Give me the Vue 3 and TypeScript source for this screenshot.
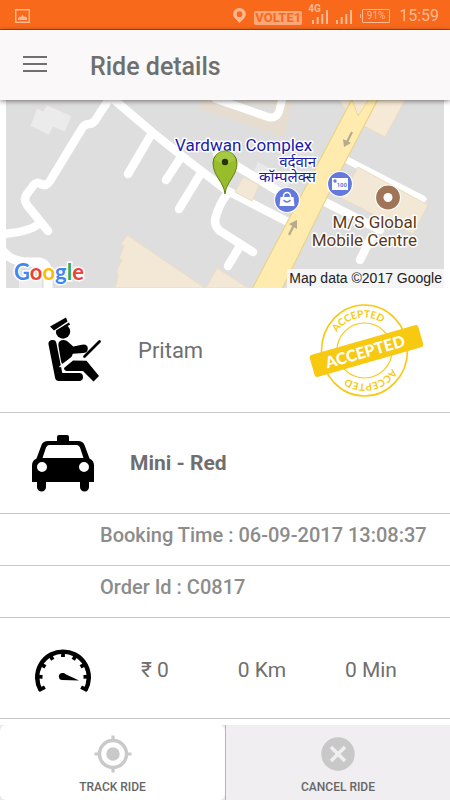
<script setup lang="ts">
interface RideStat {
  id: string
  label: string
}

const ride = {
  driver: 'Pritam',
  vehicle: 'Mini - Red',
  bookingTime: '06-09-2017 13:08:37',
  orderId: 'C0817',
}

const stats: RideStat[] = [
  { id: 'fare', label: '₹ 0' },
  { id: 'distance', label: '0 Km' },
  { id: 'duration', label: '0 Min' },
]

const dialTicks: number[] = [-118, -88, -59, -30, 0, 30, 59, 88, 118]
</script>

<template>
  <div class="screen">
    <div class="status-bar">
      <svg class="status-picture" width="15" height="14" viewBox="0 0 15 14" aria-hidden="true">
        <rect x="0.7" y="0.7" width="13.6" height="12.6" fill="none" stroke="currentColor" stroke-width="1.4" />
        <path d="M3 11V9l2-1.500 1 .5 1.500-2.500L9 8l1-.7L12 9v2z" fill="currentColor" />
      </svg>
      <svg class="status-pin" width="13" height="15" viewBox="0 0 13 15" aria-hidden="true">
        <path fill="currentColor" fill-rule="evenodd" d="M6.5 0A6.3 6.3 0 0 0 .2 6.2C.2 9.5 4 12 6.5 15 9 12 12.800 9.500 12.800 6.200A6.300 6.300 0 0 0 6.500 0zM6.500 3.300a2.900 2.900 0 1 1 0 5.800 2.900 2.900 0 0 1 0-5.800z" />
      </svg>
      <span class="volte">VOLTE1</span>
      <span class="signal">
        <span class="network">4G</span>
        <svg width="16" height="14" viewBox="0 0 16 14" fill="currentColor" aria-hidden="true">
          <path d="M0 10h2v4H0zM4.700 7h2v7h-2zM9.300 4h2v10h-2zM14 0h2v14h-2z" />
        </svg>
      </span>
      <svg class="signal-two" width="16" height="14" viewBox="0 0 16 14" fill="currentColor" aria-hidden="true">
        <path d="M0 10h2v4H0zM4.700 7h2v7h-2zM9.300 4h2v10h-2zM14 0h2v14h-2z" />
      </svg>
      <span class="battery">91%</span>
      <span class="clock">15:59</span>
    </div>

    <header class="app-bar">
      <button class="menu" type="button" aria-label="Menu">
        <svg width="24" height="18" viewBox="0 0 24 18" aria-hidden="true">
          <path d="M0 2h24M0 9h24M0 16h24" stroke="currentColor" stroke-width="2.200" />
        </svg>
      </button>
      <h1>Ride details</h1>
    </header>

    <main>
      <svg class="map" viewBox="6 100 438 188" preserveAspectRatio="xMidYMid slice" role="img" aria-label="Pickup location">
        <rect x="6" y="100" width="438" height="188" fill="#dedede" />
        <path d="M47 105l25 11-7 16-12-5-4 8-19-9 7-18 6 3z" fill="#ebebeb" stroke="#dfddd9" stroke-width="0.700" />
        <path d="M200 100v9l85 28 7-37z" fill="#e6dcd0" />
        <path d="M224 100h52l-4 13-9-2-39-11z" fill="#dedede" />
        <path d="M238 100h38l-2 6q-18 0-36-6z" fill="#e2ddd6" />
        <path d="M258 162l34 18-8 12-32-17z" fill="#e9e9e9" />
        <path d="M19 276h23v12H19z" fill="#eeeeee" />
        <g fill="none" stroke="#fff" stroke-width="8.500" stroke-linecap="round" stroke-linejoin="round">
          <path d="M110 98L98 116q-4 8-9 8t-8 6L50 181q-4 6-9 3t-8 2l-6 8q-4 5 0 11l21 26" />
          <path d="M39 223q-6 8-35 11" />
          <path d="M2 250q8 11 23 12h14q9 2 9 12v16" stroke-width="9" />
          <path d="M112 98l40 34 30 24 44 34 66 34" />
          <path d="M152 133l-24 41M181 157l-15 23M201 173l-22 36" />
          <path d="M227 194q-8 11-11 22-3 9 4 15l33 21M240 246l-12 20" />
          <path d="M217 154l77 47" />
          <path d="M216 99l52 18q8 2 11-5l4-16" stroke-width="8" />
          <path d="M325 202l55 28M371 238l-11 22" />
          <path d="M345 159l78 40" stroke-width="7" />
        </g>
        <g fill="#f2e8d5" stroke="#edddc0" stroke-width="1">
          <path d="M127 235l78 53h-90l3-11-1-7 5-10-3-2 5-12-3-2z" />
          <path d="M217 268l31 20h-42z" />
          <path d="M358 167l70 38-15 29-72-36z" />
          <path d="M243 177l16 8-7 16-17-9z" />
          <path d="M377 100l-13 26 21 11 20-37z" fill="#f6e9d5" />
          <path d="M338 98l10 15 5-15z" />
        </g>
        <path d="M352 99l-100 190h30l46-94 50-96z" fill="#ffebad" stroke="#ead391" stroke-width="1.200" />
        <path d="M352 99l6 17 11-17z" fill="#f6e9d5" stroke="#ead391" stroke-width="0.800" />
        <g fill="none" stroke="#b5ab8d" stroke-width="2.200">
          <path d="M352 132l-5 10M289 235l5-10" />
          <path d="M343 139l8 4-7 4zM297 220l-8 4 8 5z" fill="#b5ab8d" stroke="none" />
        </g>

        <g class="map-place">
          <text x="175" y="151" font-size="17">Vardwan Complex</text>
          <text x="316" y="167" font-size="15" text-anchor="end">वर्दवान</text>
          <text x="316" y="182" font-size="15" text-anchor="end">कॉम्पलेक्स</text>
        </g>
        <g class="map-place map-shop" text-anchor="end">
          <text x="417" y="228" font-size="17">M/S Global</text>
          <text x="417" y="246" font-size="17">Mobile Centre</text>
        </g>

        <g stroke="#fff" stroke-width="1.200">
          <circle cx="287" cy="200" r="12.500" fill="#6579dc" />
          <circle cx="340" cy="184" r="12.500" fill="#6579dc" />
          <circle cx="388" cy="197.500" r="12.500" fill="#a07456" />
        </g>
        <circle cx="388" cy="197.500" r="4.500" fill="#fff" />
        <path d="M280.500 197h13l1 9h-15z" fill="#fff" />
        <path d="M283.500 198v-2a3.500 3.500 0 0 1 7 0v2" fill="none" stroke="#fff" stroke-width="1.500" />
        <path d="M283.500 200q3.500 4 7 0" fill="none" stroke="#6579dc" stroke-width="1.300" />
        <rect x="332" y="178" width="16" height="12" fill="#fff" />
        <circle cx="335" cy="181" r="1.700" fill="#6579dc" />
        <text class="ticket" x="347" y="187" font-size="6" text-anchor="end">100</text>

        <path d="M225 194c-1-12-12-18-12-31a12 12 0 0 1 24 0c0 13-11 19-12 31z" fill="#97bd2b" stroke="#5f7d16" stroke-width="1" />
        <path d="M215 160a10 10 0 0 1 20 0q-10 7-20 0z" fill="#b8d657" opacity="0.500" />
        <circle cx="225" cy="162" r="3.200" fill="#26330b" />

        <text class="google" x="14" y="280" font-size="22"><tspan fill="#4285f4">G</tspan><tspan fill="#ea4335">o</tspan><tspan fill="#fbbc05">o</tspan><tspan fill="#4285f4">g</tspan><tspan fill="#34a853">l</tspan><tspan fill="#ea4335">e</tspan></text>
        <rect x="287" y="269" width="157" height="19" fill="#f5f5f5" />
        <text class="attribution" x="442" y="283" font-size="14" text-anchor="end">Map data ©2017 Google</text>
      </svg>

      <section class="row driver">
        <svg class="driver-icon" width="54" height="66" viewBox="0 0 54 66" aria-hidden="true">
          <circle cx="15" cy="14.500" r="7.200" />
          <path d="M3 17L25 6V0H2z" fill="#fff" />
          <path d="M2 9.500L18 .5l1.500 4L6 13.500z" />
          <path d="M8.500 14.500L21.500 6.500" stroke="#000" stroke-width="2.200" />
          <path d="M4.500 27L11 60h20" fill="none" stroke="#000" stroke-width="8" stroke-linecap="round" stroke-linejoin="round" />
          <path d="M10.300 28q0-5 5.500-5 3 0 5.500 3l4 3.500 10-2q4.500 0 4.500 4t-4 4.500l-11 .7-1.500 4-8.300 6.500q-1.500-.7-2-3z" />
          <path d="M16 51l9-7.500 13.500.3L51 59l-5.500 5.500L35 54H19q-3-.5-3-3z" />
          <path d="M11.500 50L24.500 40" stroke="#fff" stroke-width="1.500" />
          <path d="M36.500 39.500L51.500 24.500" stroke="#000" stroke-width="2.800" stroke-linecap="round" />
        </svg>
        <span class="driver-name">{{ ride.driver }}</span>
        <svg class="stamp" width="116" height="96" viewBox="309 302 116 96" role="img" aria-label="Accepted">
          <defs>
            <path id="stamp-arc" d="M331.500 350.500a33 33 0 0 1 66 0" />
          </defs>
          <g fill="none" stroke="#f8c911">
            <ellipse cx="364.500" cy="350.500" rx="43" ry="45.500" stroke-width="1.600" />
            <circle cx="364.500" cy="350.500" r="27.500" stroke-width="1.200" />
          </g>
          <g class="stamp-text stamp-ring">
            <text font-size="10" transform="rotate(-12 364.500 350.500)"><textPath href="#stamp-arc" startOffset="50%">ACCEPTED</textPath></text>
            <text font-size="10" transform="rotate(168 364.500 350.500)"><textPath href="#stamp-arc" startOffset="50%">ACCEPTED</textPath></text>
          </g>
          <g transform="rotate(-16 366.500 351)">
            <rect x="310" y="339.500" width="113" height="23" rx="3" fill="#f8c911" />
            <text class="stamp-text stamp-band" x="365" y="357" font-size="16">ACCEPTED</text>
          </g>
        </svg>
      </section>

      <section class="row vehicle">
        <svg width="62" height="57" viewBox="0 0 62 57" aria-hidden="true">
          <path fill-rule="evenodd" d="M27 0h8q2 0 2 2v4h9q5 0 6.500 4l5 13.500q4.500 2 4.500 7V47h-5v5a4.500 4.500 0 0 1-9 0v-5H14v5a4.500 4.500 0 0 1-9 0v-5H0V30.500q0-5 4.500-7l5-13.500Q11 6 16 6h9V2q0-2 2-2zM17 10q-2 0-3 2.500L10.500 23h41L48 12.500Q47 10 45 10zM10 27a5 5 0 1 0 0 10 5 5 0 0 0 0-10zM52 27a5 5 0 1 0 0 10 5 5 0 0 0 0-10z" />
        </svg>
        <span class="vehicle-name">{{ ride.vehicle }}</span>
      </section>

      <p class="row detail">Booking Time : {{ ride.bookingTime }}</p>
      <p class="row detail">Order Id : {{ ride.orderId }}</p>

      <section class="row meter">
        <svg width="60" height="46" viewBox="0 0 60 46" aria-hidden="true">
          <path d="M7.500 43A25.800 25.800 0 1 1 52.500 43" fill="none" stroke="#000" stroke-width="4.400" />
          <g stroke="#000" stroke-width="3.800">
            <path v-for="angle in dialTicks" :key="angle" d="M30 3v7" :transform="`rotate(${angle} 30 30.500)`" />
          </g>
          <circle cx="29.500" cy="29.500" r="3.600" />
          <path d="M30 26l16 7.500L29 33z" />
        </svg>
        <div class="stats">
          <span v-for="stat in stats" :key="stat.id">{{ stat.label }}</span>
        </div>
      </section>
    </main>

    <footer class="actions">
      <button class="action track" type="button">
        <svg width="38" height="38" viewBox="0 0 38 38" aria-hidden="true">
          <circle cx="19" cy="19" r="13.500" fill="none" stroke="#c9c9c9" stroke-width="3.400" />
          <circle cx="19" cy="19" r="6.700" fill="#c9c9c9" />
          <path d="M19 .5v5M19 32.500v5M.5 19h5M32.500 19h5" stroke="#c9c9c9" stroke-width="3.200" />
        </svg>
        <span>TRACK RIDE</span>
      </button>
      <button class="action cancel" type="button">
        <svg width="38" height="38" viewBox="0 0 38 38" aria-hidden="true">
          <circle cx="19" cy="19" r="16.700" fill="#c8c8c8" />
          <path d="M12 12l14 14M26 12L12 26" stroke="#f0eef0" stroke-width="3.600" />
        </svg>
        <span>CANCEL RIDE</span>
      </button>
    </footer>
  </div>
</template>

<style>
body {
  background: #fff;
}
</style>

<style scoped>
.screen {
  display: flex;
  flex-direction: column;
  min-height: 100vh;
  color: #6f6f6f;
  font-family: Roboto, "Noto Sans", sans-serif;
}

.status-bar {
  display: flex;
  align-items: center;
  box-sizing: border-box;
  height: 30px;
  padding: 2px 11px 0 15px;
  border-bottom: 1px solid #c9400c;
  background: #f8691c;
  color: #fcb993;
}

.status-pin {
  margin-left: auto;
}

.volte {
  margin: 4px 10px 0 8px;
  padding: 0 1px;
  border-radius: 2px;
  background: #fba777;
  color: #f8691c;
  font-size: 13px;
  font-weight: 700;
  line-height: 14px;
}

.signal {
  position: relative;
  display: flex;
  margin: 2px 8px 0 0;
}

.network {
  position: absolute;
  top: -6px;
  left: -4px;
  font-size: 10px;
  font-weight: 700;
  line-height: 10px;
}

.signal-two {
  margin: 2px 10px 0 0;
}

.battery {
  position: relative;
  box-sizing: border-box;
  width: 28px;
  margin-right: 9px;
  border: 1px solid currentColor;
  border-radius: 1px;
  font-size: 10px;
  line-height: 12px;
  text-align: center;
}

.battery::before {
  position: absolute;
  top: 4px;
  left: -3px;
  width: 1px;
  height: 4px;
  background: currentColor;
  content: "";
}

.clock {
  font-size: 16px;
}

.app-bar {
  position: relative;
  z-index: 1;
  display: flex;
  align-items: center;
  box-sizing: border-box;
  height: 70px;
  padding: 2px 23px 0;
  background: #faf8f9;
  box-shadow: 0 1px 5px rgba(0, 0, 0, 0.5);
}

.menu {
  display: flex;
  margin: 0 43px 4px 0;
  padding: 0;
  border: 0;
  background: none;
  color: #6f6f6f;
}

h1 {
  margin: 0;
  font-size: 25px;
  font-weight: 500;
}

main {
  display: flex;
  flex: 1;
  flex-direction: column;
}

.map {
  align-self: stretch;
  height: 188px;
  margin: 0 6px;
}

.map text {
  font-family: Roboto, "Noto Sans", sans-serif;
}

.map-place {
  fill: #1a1aa8;
  stroke: #fff;
  stroke-width: 3px;
  stroke-linejoin: round;
  paint-order: stroke;
}

.map-shop {
  fill: #5c3a1c;
}

.map .ticket {
  fill: #6579dc;
  font-weight: 700;
}

.map .google {
  font-family: Lato, sans-serif;
  font-weight: 700;
  stroke: #fff;
  stroke-width: 3px;
  paint-order: stroke;
}

.map .attribution {
  fill: #222;
  font-family: "Liberation Sans", Arial, sans-serif;
}

.stamp-text {
  font-family: Lato, sans-serif;
  font-weight: 700;
  text-anchor: middle;
}

.stamp-ring {
  fill: #f8c911;
}

.stamp-band {
  fill: #fff;
  font-weight: 900;
}

.row {
  display: flex;
  align-items: center;
  box-sizing: border-box;
  margin: 0;
  border-bottom: 1px solid #c8c8c8;
}

.driver {
  height: 125px;
  padding: 0 25px 0 48px;
}

.driver-name {
  flex: 1;
  margin-left: 36px;
  font-size: 22px;
}

.vehicle {
  height: 101px;
  padding: 0 32px;
}

.vehicle-name {
  margin-left: 36px;
  font-size: 21px;
  font-weight: 700;
}

.detail {
  height: 52px;
  padding: 0 0 10px 100px;
  color: #8c8c8c;
  font-size: 20px;
  font-weight: 500;
}

.meter {
  height: 101px;
  padding: 3px 53px 0 33px;
}

.stats {
  display: grid;
  flex: 1;
  grid-template-columns: 19fr 21fr 10fr;
  margin-left: 48px;
  font-size: 21px;
  white-space: nowrap;
}

.actions {
  display: grid;
  grid-template-columns: 1fr 1fr;
  margin-top: 5px;
  background: #e8e8e8;
}

.action {
  display: flex;
  flex-direction: column;
  align-items: center;
  gap: 6px;
  height: 75px;
  padding: 10px 0 0;
  border: 0;
  color: #666;
  font: 500 12px/16px Roboto, sans-serif;
}

.track {
  border-radius: 6px;
  background: #fff;
}

.cancel {
  border-left: 1px solid #b5b5b5;
  background: #f0eef0;
}
</style>
